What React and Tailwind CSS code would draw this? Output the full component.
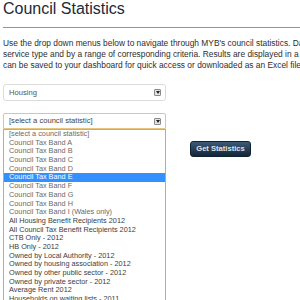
import React from "react";

const items = [
  "[select a council statistic]",
  "Council Tax Band A",
  "Council Tax Band B",
  "Council Tax Band C",
  "Council Tax Band D",
  "Council Tax Band E",
  "Council Tax Band F",
  "Council Tax Band G",
  "Council Tax Band H",
  "Council Tax Band I (Wales only)",
  "All Housing Benefit Recipients 2012",
  "All Council Tax Benefit Recipients 2012",
  "CTB Only - 2012",
  "HB Only - 2012",
  "Owned by Local Authority - 2012",
  "Owned by housing association - 2012",
  "Owned by other public sector - 2012",
  "Owned by private sector - 2012",
  "Average Rent 2012",
  "Households on waiting lists - 2011",
  "Households in temporary accommodation",
];

function Arrow() {
  return (
    <div className="w-[7px] h-[7px] border border-[#8a8a8a] bg-[#e4e4e4] flex items-center justify-center rounded-[1px]">
      <svg width="4" height="3" viewBox="0 0 4 3">
        <path d="M0 0 H4 L2 3 Z" fill="#222" />
      </svg>
    </div>
  );
}

export default function App() {
  return (
    <div
      className="w-[300px] h-[300px] overflow-hidden bg-white pl-[3px]"
      style={{ fontFamily: '"Liberation Sans", Arial, sans-serif' }}
    >
      <div className="text-[16px] leading-[16px] pt-[1px] text-[#1c2a38] whitespace-nowrap">
        Council Statistics
      </div>
      <div className="mt-[10px] h-px bg-[#8c949e]" />
      <div className="mt-[10px] text-[8.4px] leading-[11px] text-[#2e2e2e] whitespace-nowrap overflow-hidden">
        <div>Use the drop down menus below to navigate through MYB's council statistics. Data can be filtered by</div>
        <div>service type and by a range of corresponding criteria. Results are displayed in a table and</div>
        <div>can be saved to your dashboard for quick access or downloaded as an Excel file.</div>
      </div>
      <div className="mt-[13px] w-[163px] h-[17px] border border-[#dcdcdc] rounded-[3px] flex items-center justify-between pl-[5px] pr-[4px]">
        <span className="text-[7.6px] text-[#555]">Housing</span>
        <Arrow />
      </div>
      <div className="mt-[12px] flex">
        <div className="w-[163px]">
          <div className="h-[16px] border border-[#e6c57e] rounded-t-[2px] flex items-center justify-between pl-[5px] pr-[4px]">
            <span className="text-[7.6px] text-[#444]">[select a council statistic]</span>
            <Arrow />
          </div>
          <div className="border border-[#9fb0c4]">
            {items.map((t, i) => (
              <div
                key={t}
                className={
                  "h-[8.7px] leading-[8.7px] text-[7.3px] pl-[5px] whitespace-nowrap " +
                  (i === 5 ? "bg-[#3390ff] text-white" : i < 10 ? "text-[#6a6a6a]" : "text-[#3d3d3d]")
                }
              >
                {t}
              </div>
            ))}
          </div>
        </div>
        <div className="ml-[24px] mt-[28px]">
          <button className="w-[61px] h-[16px] rounded-[3px] border border-[#0f2233] bg-gradient-to-b from-[#3d5a76] to-[#142638] text-[7.6px] font-bold text-[#dfe6ee] flex items-center justify-center">
            Get Statistics
          </button>
        </div>
      </div>
    </div>
  );
}
